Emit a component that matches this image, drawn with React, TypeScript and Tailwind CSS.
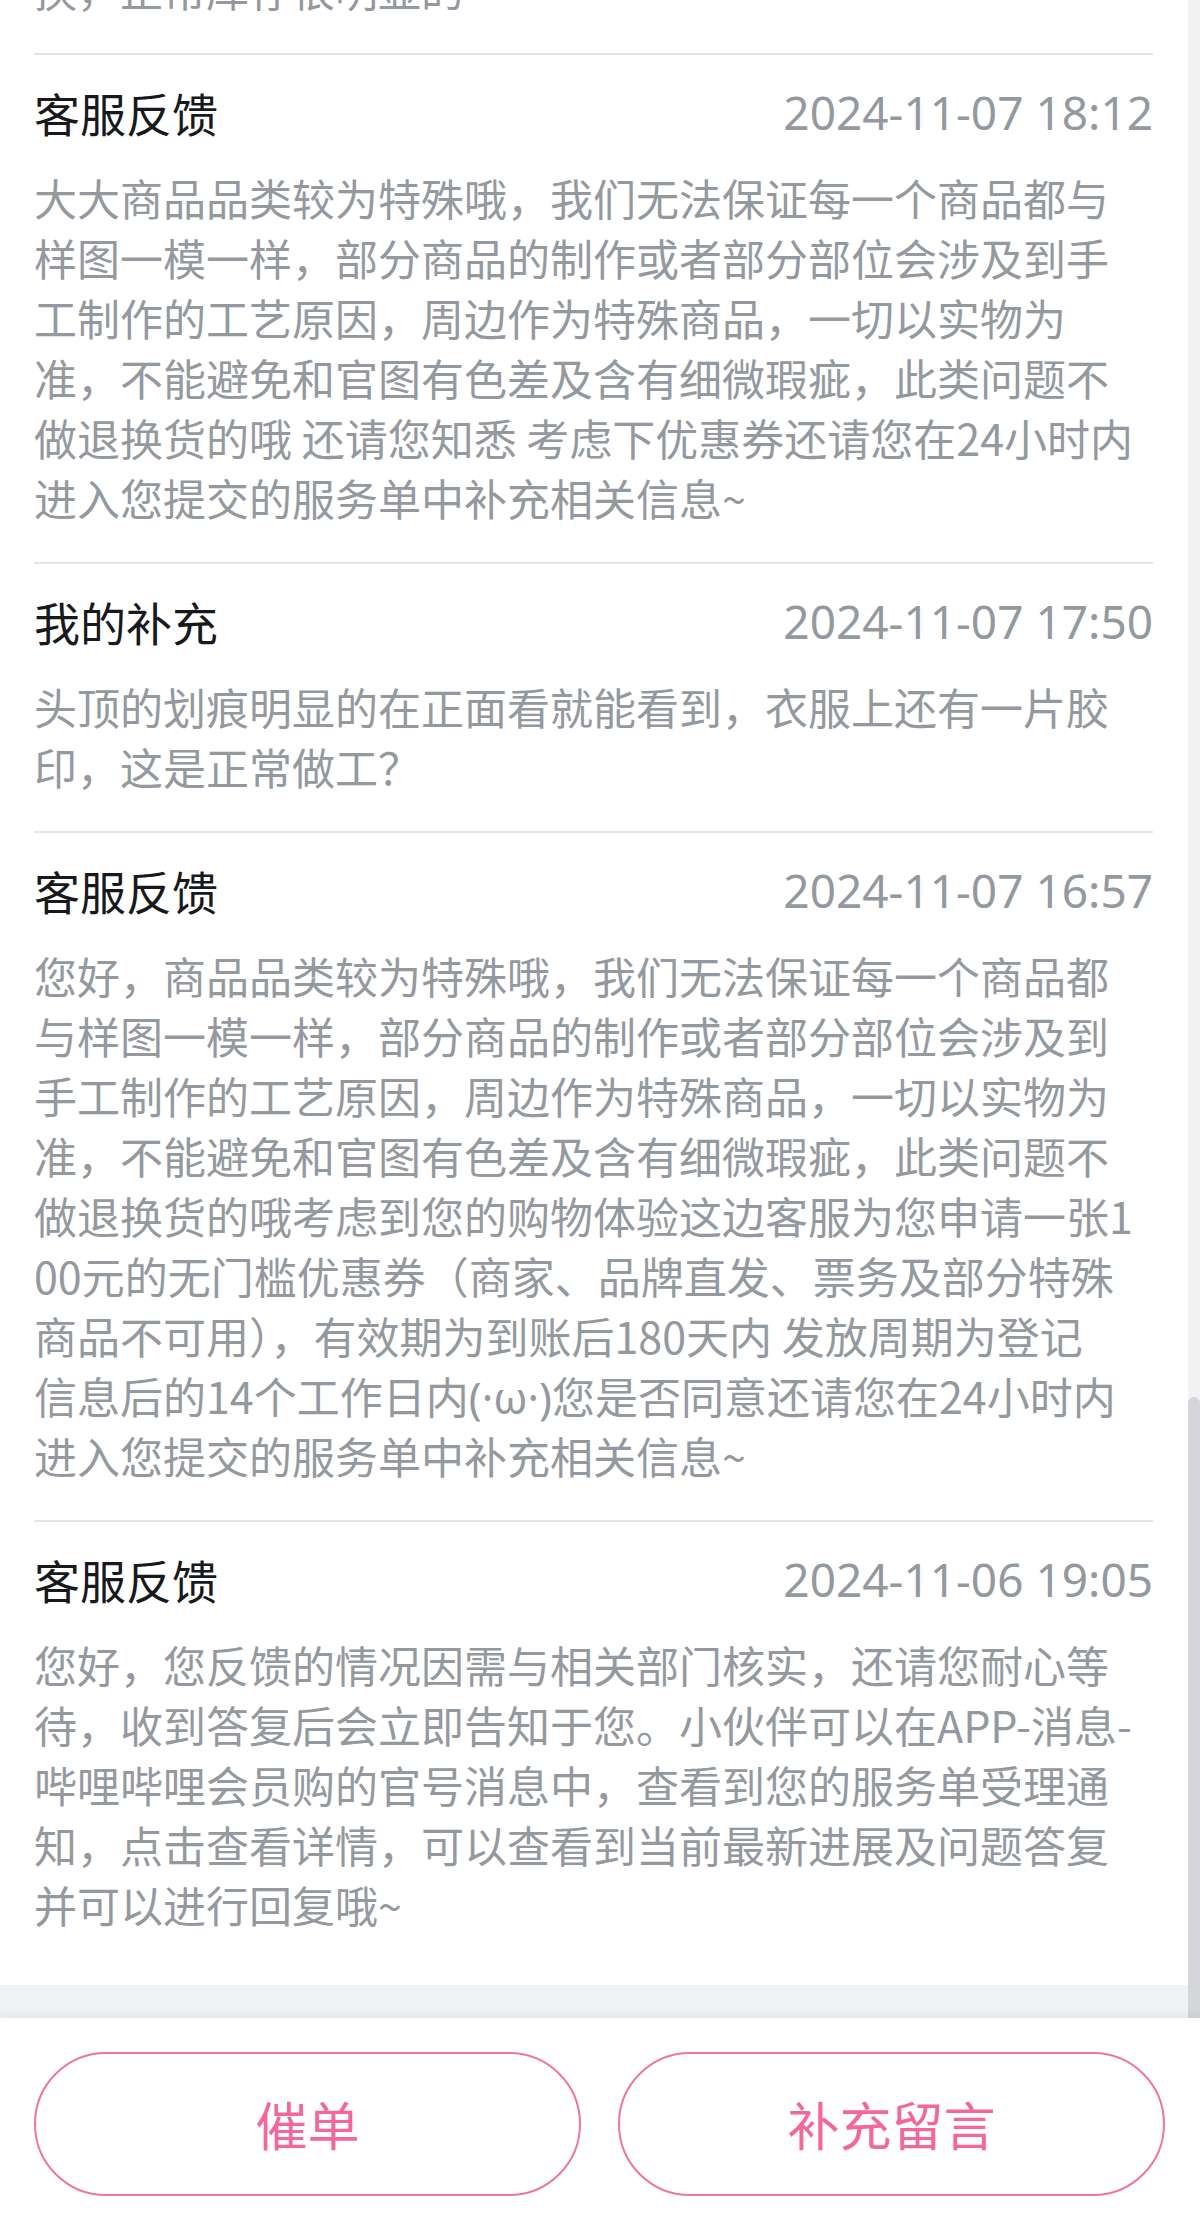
import React from "react";

type Block = { title: string; date: string; lines: React.ReactNode[] };

const blocks: Block[] = [
  {
    title: "客服反馈",
    date: "2024-11-07 18:12",
    lines: [
      "大大商品品类较为特殊哦，我们无法保证每一个商品都与",
      "样图一模一样，部分商品的制作或者部分部位会涉及到手",
      "工制作的工艺原因，周边作为特殊商品，一切以实物为",
      "准，不能避免和官图有色差及含有细微瑕疵，此类问题不",
      "做退换货的哦 还请您知悉 考虑下优惠券还请您在24小时内",
      "进入您提交的服务单中补充相关信息~",
    ],
  },
  {
    title: "我的补充",
    date: "2024-11-07 17:50",
    lines: [
      "头顶的划痕明显的在正面看就能看到，衣服上还有一片胶",
      "印，这是正常做工？",
    ],
  },
  {
    title: "客服反馈",
    date: "2024-11-07 16:57",
    lines: [
      "您好，商品品类较为特殊哦，我们无法保证每一个商品都",
      "与样图一模一样，部分商品的制作或者部分部位会涉及到",
      "手工制作的工艺原因，周边作为特殊商品，一切以实物为",
      "准，不能避免和官图有色差及含有细微瑕疵，此类问题不",
      "做退换货的哦考虑到您的购物体验这边客服为您申请一张1",
      "00元的无门槛优惠券（商家、品牌直发、票务及部分特殊",
      "商品不可用），有效期为到账后180天内 发放周期为登记",
      <>
        信息后的14个工作日内
        <span className="font-['Noto_Sans',sans-serif]">(·ω·)</span>
        您是否同意还请您在24小时内
      </>,
      "进入您提交的服务单中补充相关信息~",
    ],
  },
  {
    title: "客服反馈",
    date: "2024-11-06 19:05",
    lines: [
      "您好，您反馈的情况因需与相关部门核实，还请您耐心等",
      "待，收到答复后会立即告知于您。小伙伴可以在APP-消息-",
      "哔哩哔哩会员购的官号消息中，查看到您的服务单受理通",
      "知，点击查看详情，可以查看到当前最新进展及问题答复",
      "并可以进行回复哦~",
    ],
  },
];

function Lines({ lines }: { lines: React.ReactNode[] }) {
  return (
    <div className="text-[43px] leading-[60px] text-[#9499a0] font-['Noto_Sans_CJK_SC',sans-serif]">
      {lines.map((l, i) => (
        <div key={i} className="h-[60px] whitespace-pre">
          {l}
        </div>
      ))}
    </div>
  );
}

export default function App() {
  return (
    <div className="w-[1200px] h-[2232px] flex flex-col overflow-hidden bg-[#f1f2f3] font-['Noto_Sans_CJK_SC',sans-serif]">
      <div className="flex-1 flex min-h-0">
        <div className="w-[1188px] flex flex-col">
          <div className="bg-white pl-[34px] pr-[35px] pb-[51px]">
            <div className="h-[18px] overflow-hidden">
              <div className="-mt-[42px]">
                <Lines lines={["换，正常库存很明显的"]} />
              </div>
            </div>
            <div className="h-[35px]" />
            {blocks.map((b, i) => (
              <div key={i} className="border-t-2 border-[#e3e5e7] pt-[27px] pb-[35px] last:pb-0">
                <div className="flex items-center justify-between h-[60px]">
                  <span className="text-[46px] leading-[60px] text-[#18191c]">{b.title}</span>
                  <span className="text-[46px] leading-[60px] text-[#9499a0] font-['Noto_Sans','Noto_Sans_CJK_SC',sans-serif]">
                    {b.date}
                  </span>
                </div>
                <div className="mt-[25px]">
                  <Lines lines={b.lines} />
                </div>
              </div>
            ))}
          </div>
          <div className="h-[33px] bg-[#f1f2f3]" />
        </div>
        <div className="w-[12px] bg-[#f1f2f3] flex flex-col">
          <div className="mt-[1397px] flex-1 bg-[#d5d6d9] rounded-t-[6px]" />
        </div>
      </div>
      <div className="relative z-10 h-[214px] bg-white shadow-[0_-3px_8px_rgba(0,0,0,0.06)] flex gap-[37px] pl-[34px] pr-[35px] pt-[34px] pb-[36px]">
        <button className="flex-1 rounded-full border-2 border-[#ef75a0] text-[#f4679b] text-[52px] flex items-center justify-center">
          催单
        </button>
        <button className="flex-1 rounded-full border-2 border-[#ef75a0] text-[#f4679b] text-[52px] flex items-center justify-center">
          补充留言
        </button>
      </div>
    </div>
  );
}
